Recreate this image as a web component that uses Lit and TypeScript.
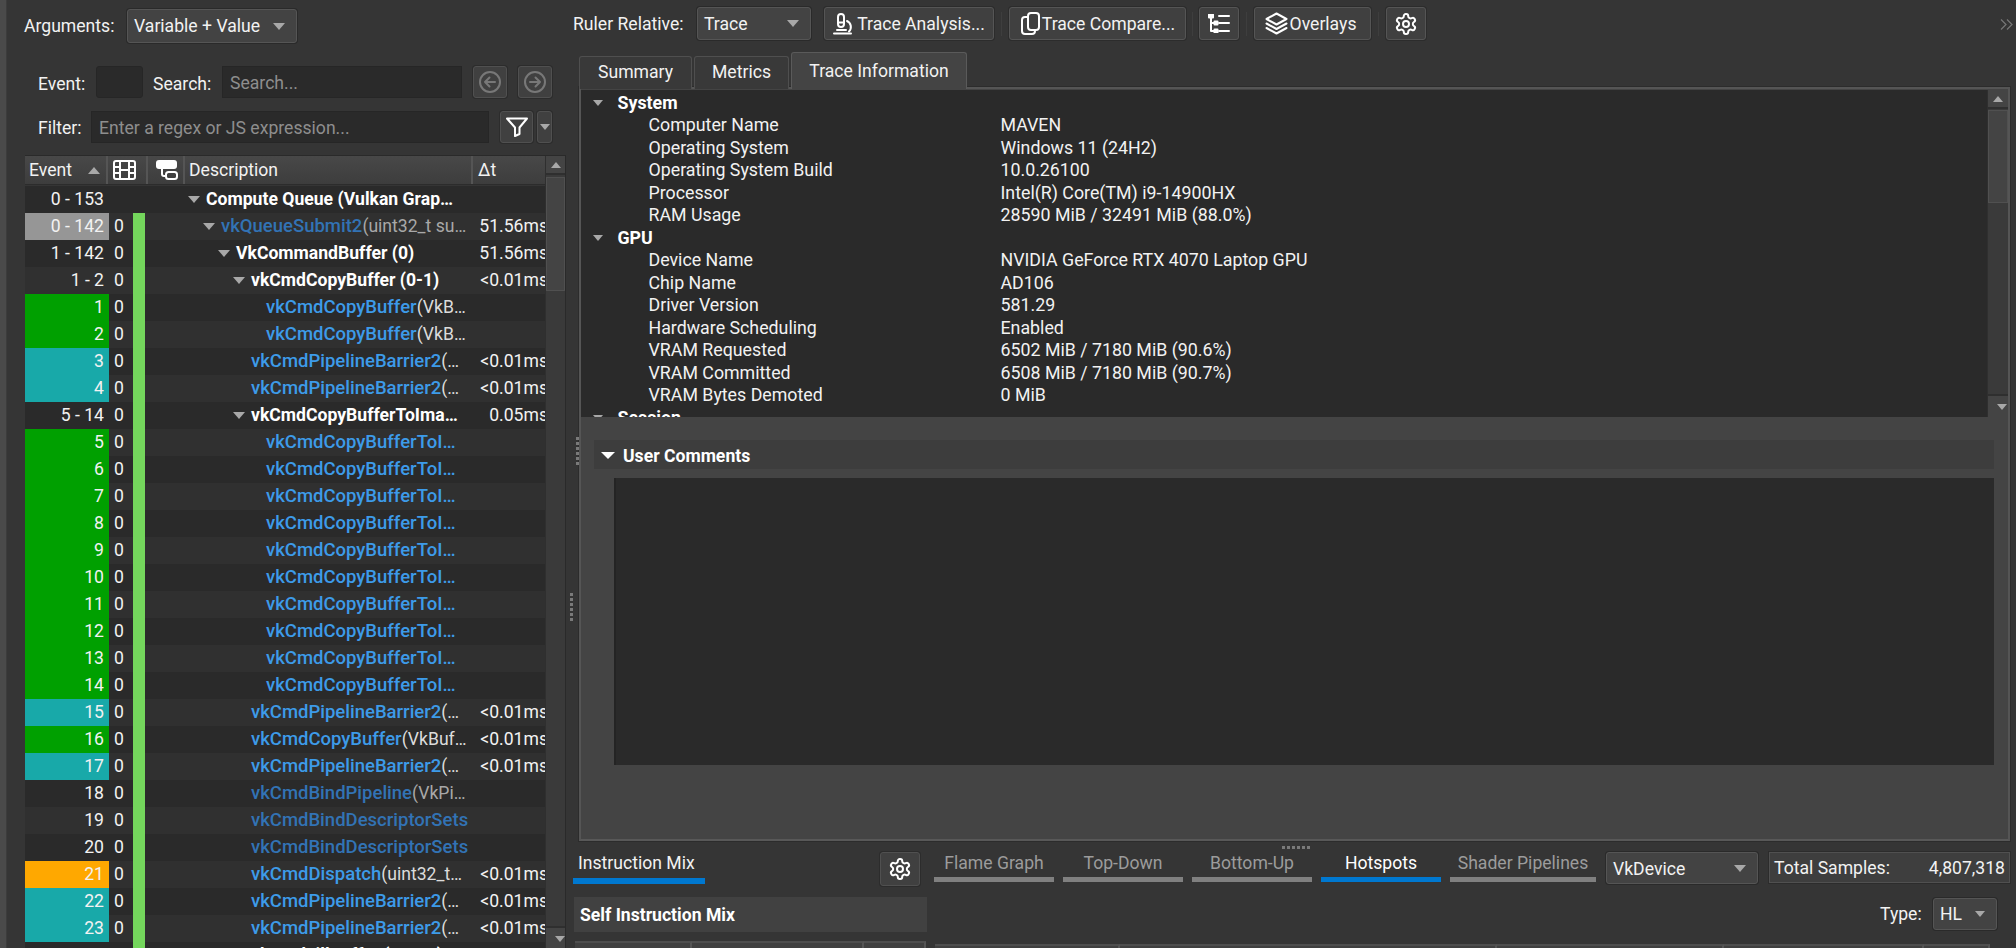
import { LitElement, html, css, svg } from 'lit';
import { customElement } from 'lit/decorators.js';

type Row = {
  ev: string; zero?: boolean; level: number; group?: boolean; fn: string; args?: string; dt?: string;
  tone?: string; dim?: boolean;
};

const copyTo = 'vkCmdCopyBufferToI…';

const rows: Row[] = [
  { ev: '0 - 153', level: 0, group: true, fn: 'Compute Queue (Vulkan Grap…' },
  { ev: '0 - 142', zero: true, level: 1, fn: 'vkQueueSubmit2', args: '(uint32_t su…', dt: '51.56ms', tone: 'gray', dim: true },
  { ev: '1 - 142', zero: true, level: 2, group: true, fn: 'VkCommandBuffer (0)', dt: '51.56ms' },
  { ev: '1 - 2', zero: true, level: 3, group: true, fn: 'vkCmdCopyBuffer (0-1)', dt: '<0.01ms' },
  { ev: '1', zero: true, level: 4, fn: 'vkCmdCopyBuffer', args: '(VkB…', tone: 'green' },
  { ev: '2', zero: true, level: 4, fn: 'vkCmdCopyBuffer', args: '(VkB…', tone: 'green' },
  { ev: '3', zero: true, level: 3, fn: 'vkCmdPipelineBarrier2', args: '(…', dt: '<0.01ms', tone: 'teal' },
  { ev: '4', zero: true, level: 3, fn: 'vkCmdPipelineBarrier2', args: '(…', dt: '<0.01ms', tone: 'teal' },
  { ev: '5 - 14', zero: true, level: 3, group: true, fn: 'vkCmdCopyBufferToIma…', dt: '0.05ms' },
  ...[5, 6, 7, 8, 9, 10, 11, 12, 13, 14].map((n) => ({ ev: String(n), zero: true, level: 4, fn: copyTo, tone: 'green' })),
  { ev: '15', zero: true, level: 3, fn: 'vkCmdPipelineBarrier2', args: '(…', dt: '<0.01ms', tone: 'teal' },
  { ev: '16', zero: true, level: 3, fn: 'vkCmdCopyBuffer', args: '(VkBuf…', dt: '<0.01ms', tone: 'green' },
  { ev: '17', zero: true, level: 3, fn: 'vkCmdPipelineBarrier2', args: '(…', dt: '<0.01ms', tone: 'teal' },
  { ev: '18', zero: true, level: 3, fn: 'vkCmdBindPipeline', args: '(VkPi…', dim: true },
  { ev: '19', zero: true, level: 3, fn: 'vkCmdBindDescriptorSets', dim: true },
  { ev: '20', zero: true, level: 3, fn: 'vkCmdBindDescriptorSets', dim: true },
  { ev: '21', zero: true, level: 3, fn: 'vkCmdDispatch', args: '(uint32_t…', dt: '<0.01ms', tone: 'orange' },
  { ev: '22', zero: true, level: 3, fn: 'vkCmdPipelineBarrier2', args: '(…', dt: '<0.01ms', tone: 'teal' },
  { ev: '23', zero: true, level: 3, fn: 'vkCmdPipelineBarrier2', args: '(…', dt: '<0.01ms', tone: 'teal' },
  { ev: '24 - 29', zero: true, level: 3, group: true, fn: 'vkCmdFillBuffer (24-29)', dt: '0.01ms' },
];

const info: [string, [string, string][]][] = [
  ['System', [
    ['Computer Name', 'MAVEN'],
    ['Operating System', 'Windows 11 (24H2)'],
    ['Operating System Build', '10.0.26100'],
    ['Processor', 'Intel(R) Core(TM) i9-14900HX'],
    ['RAM Usage', '28590 MiB / 32491 MiB (88.0%)'],
  ]],
  ['GPU', [
    ['Device Name', 'NVIDIA GeForce RTX 4070 Laptop GPU'],
    ['Chip Name', 'AD106'],
    ['Driver Version', '581.29'],
    ['Hardware Scheduling', 'Enabled'],
    ['VRAM Requested', '6502 MiB / 7180 MiB (90.6%)'],
    ['VRAM Committed', '6508 MiB / 7180 MiB (90.7%)'],
    ['VRAM Bytes Demoted', '0 MiB'],
  ]],
  ['Session', []],
];

const gearPath = svg`<path d="M12.22 2h-.44a2 2 0 0 0-2 2v.18a2 2 0 0 1-1 1.73l-.43.25a2 2 0 0 1-2 0l-.15-.08a2 2 0 0 0-2.73.73l-.22.38a2 2 0 0 0 .73 2.73l.15.1a2 2 0 0 1 1 1.72v.51a2 2 0 0 1-1 1.74l-.15.09a2 2 0 0 0-.73 2.73l.22.38a2 2 0 0 0 2.73.73l.15-.08a2 2 0 0 1 2 0l.43.25a2 2 0 0 1 1 1.73V20a2 2 0 0 0 2 2h.44a2 2 0 0 0 2-2v-.18a2 2 0 0 1 1-1.73l.43-.25a2 2 0 0 1 2 0l.15.08a2 2 0 0 0 2.73-.73l.22-.39a2 2 0 0 0-.73-2.73l-.15-.08a2 2 0 0 1-1-1.74v-.5a2 2 0 0 1 1-1.74l.15-.09a2 2 0 0 0 .73-2.73l-.22-.38a2 2 0 0 0-2.73-.73l-.15.08a2 2 0 0 1-2 0l-.43-.25a2 2 0 0 1-1-1.73V4a2 2 0 0 0-2-2z"/><circle cx="12" cy="12" r="3"/>`;

const gear = html`<svg class="ic" width="24" height="24" viewBox="0 0 24 24">${gearPath}</svg>`;

@customElement('app-root')
export class AppRoot extends LitElement {
  static styles = css`
    :host {
      display: block;
      width: 2016px;
      height: 948px;
      overflow: hidden;
      background: #353535;
      color: #f2f2f2;
      font-family: Roboto, "Liberation Sans", sans-serif;
      font-size: 17.6px;
      line-height: 22px;
    }
    * { box-sizing: border-box; }
    .app { display: flex; height: 948px; }
    .edge { width: 7px; background: #4a4a4a; border-right: 1px solid #3c3c3c; flex: none; }
    .ic { fill: none; stroke: #fff; stroke-width: 2; stroke-linecap: round; stroke-linejoin: round; flex: none; }

    .left { width: 558px; flex: none; padding-top: 9px; }
    .line { display: flex; align-items: center; }
    .line.args { height: 34px; padding-left: 17px; }
    .line.args .lbl { width: 103px; }
    .line.search { height: 32px; margin-top: 23px; padding-left: 31px; }
    .line.search .lbl { padding-top: 3px; }
    .line.filter { height: 33px; margin-top: 12px; padding-left: 31px; }
    .line.filter .lbl { padding-top: 2px; }
    .lbl { white-space: nowrap; flex: none; }
    .w-event { width: 58px; }
    .w-search { width: 69px; }
    .w-filter { width: 53px; }

    .combo {
      display: flex; align-items: center; justify-content: space-between; flex: none;
      height: 34px; padding: 0 11px 0 6px;
      background: #434343; border: 1px solid #555; border-radius: 3px;
      box-shadow: 0 0 0 1px #2a2a2a;
    }
    .combo.args { width: 170px; }
    .combo.ruler { width: 114px; height: 33px; }
    .combo.device { width: 152px; height: 32px; padding-top: 1px; }
    .combo.hl { width: 64px; height: 32px; }
    .tri { width: 0; height: 0; border-left: 6px solid transparent; border-right: 6px solid transparent; border-top: 7px solid #a8a8a8; flex: none; }
    .tri.up { border-top: 0; border-bottom: 7px solid #a8a8a8; }
    .tri.small { border-left-width: 5px; border-right-width: 5px; border-top-width: 6px; }
    .tri.up.small { border-top-width: 0; border-bottom-width: 6px; }

    .field { height: 32px; background: #2a2a2a; border: 1px solid #262626; color: #8e8e8e; padding: 0 7px; flex: none; line-height: 33px; white-space: nowrap; }
    .field.ev { width: 47px; margin-right: 10px; border-radius: 3px; }
    .field.se { width: 240px; }
    .field.fi { width: 398px; height: 32px; line-height: 32px; }
    .sq {
      display: flex; align-items: center; justify-content: center; flex: none;
      background: #404040; border: 1px solid #505050; border-radius: 3px; box-shadow: 0 0 0 1px #2c2c2c;
    }
    .nav { width: 34px; height: 32px; }
    .nav.prev { margin-left: 11px; }
    .nav.next { margin-left: 11px; }
    .nav .ic { stroke: #787878; }
    .fbtn { width: 33px; height: 32px; margin-left: 11px; }
    .fdrop { width: 15px; height: 32px; margin-left: 4px; }

    .table { display: flex; margin: 12px 0 0 18px; width: 541px; height: 794px; border-top: 1px solid #2a2a2a; border-right: 1px solid #2a2a2a; }
    .grid { width: 520px; flex: none; overflow: hidden; }
    .head { display: flex; height: 29px; background: linear-gradient(#484848, #3d3d3d); border-bottom: 1px solid #2c2c2c; margin-bottom: 1px; }
    .head > div { display: flex; align-items: center; border-right: 2px solid #555; flex: none; height: 100%; }
    .h-event { width: 83px; padding: 0 6px 0 4px; justify-content: space-between; }
    .h-film { width: 40px; padding-left: 5px; }
    .h-queue { width: 37px; padding-left: 7px; }
    .h-desc { width: 288px; padding-left: 4px; }
    .head > .h-dt { width: 72px; padding-left: 5px; border: 0; }

    .row { display: flex; height: 27px; line-height: 27px; background: #2a2a2a; white-space: nowrap; }
    .row.alt { background: #303030; }
    .ev { width: 84px; flex: none; text-align: right; padding-right: 5px; }
    .ev.gray { background: #969696; }
    .ev.green { background: #00a000; }
    .ev.teal { background: #18a9a9; }
    .ev.orange { background: #ffa800; }
    .zero { width: 24px; flex: none; padding-left: 5px; }
    .bar { width: 12px; flex: none; }
    .bar.on { background: #74d65c; }
    .desc { width: 327px; flex: none; display: flex; align-items: center; overflow: hidden; }
    .desc .tri { margin-right: 6px; }
    .b { font-weight: 700; color: #fff; }
    .fn { color: #3d9be9; font-weight: 500; font-size: 18.5px; }
    .fn.dim { color: #3273b5; }
    .fa { color: #dcdcdc; }
    .fa.dim { color: #a8a8a8; }
    .dt { width: 73px; flex: none; overflow: hidden; padding-left: 7px; }
    .dt span { display: block; width: 69px; text-align: right; }

    .sbar { width: 20px; flex: none; background: #3a3a3a; display: flex; flex-direction: column; border-left: 1px solid #2f2f2f; }
    .sbtn { height: 19px; display: flex; align-items: center; justify-content: center; background: #444; border-bottom: 2px solid #2f2f2f; flex: none; }
    .sthumb { background: #444; border: 1px solid #505050; flex: none; }
    .sthumb.a { height: 114px; margin-top: 2px; }
    .sthumb.b2 { height: 93px; margin-top: 1px; }
    .sspace { flex: 1; }
    .sbar .bottom { height: 23px; border-bottom: 0; border-top: 2px solid #2f2f2f; }

    .right { flex: 1; min-width: 0; position: relative; }
    .dots { position: absolute; display: grid; gap: 2px; }
    .dots i { display: block; width: 3px; height: 3px; background: #7a7a7a; }
    .dots.v1 { left: 5px; top: 593px; grid-auto-flow: row; }
    .dots.v2 { left: 11px; top: 437px; grid-auto-flow: row; }
    .dots.h { left: 717px; top: 846px; grid-auto-flow: column; }
    .more { position: absolute; left: 1435px; top: 19px; fill: none; stroke: #777; stroke-width: 1.2; }

    .tools { display: flex; align-items: center; height: 33px; margin-top: 7px; padding-left: 8px; }
    .tools .lbl { width: 124px; }
    .btn {
      display: flex; align-items: center; justify-content: center; gap: 2px; height: 33px; flex: none;
      background: #404040; border: 1px solid #555; border-radius: 3px; box-shadow: 0 0 0 1px #2c2c2c;
      white-space: nowrap;
    }
    .sep { width: 1px; height: 24px; background: #3e3e3e; margin: 0 7px; flex: none; }
    .sep.tight { margin: 0 6px; }
    .ml { margin-left: 13px; }
    .b-ana { width: 170px; }
    .b-cmp { width: 177px; }
    .b-tree { width: 40px; }
    .b-ovl { width: 117px; padding-right: 4px; }
    .b-gear { width: 40px; }

    .tabs { display: flex; align-items: flex-end; height: 37px; margin: 12px 0 0 14px; gap: 2px; position: relative; z-index: 1; }
    .tab { height: 33px; padding-top: 4px; text-align: center; background: #393939; border: 1px solid #4f4f4f; border-bottom: 0; border-radius: 3px 3px 0 0; flex: none; }
    .tab.t1 { width: 113px; }
    .tab.t2 { width: 95px; }
    .tab.t3 { width: 176px; height: 37px; padding-top: 7px; background: #444; border-color: #5a5a5a; }

    .frame { margin: -2px 0 0 14px; width: 1431px; height: 754px; background: #444; border: 2px solid #555; border-bottom-color: #585858; outline: 1px solid #2c2c2c; display: flex; flex-direction: column; }
    .tree { height: 327px; flex: none; background: #2a2a2a; display: flex; margin-top: 1px; overflow: hidden; font-size: 17.8px; }
    .tree-body { flex: 1; padding-top: 1.5px; overflow: hidden; height: 100%; }
    .sec { display: flex; align-items: center; height: 22.5px; padding-left: 12px; font-weight: 700; color: #fff; }
    .sec .tri { margin-right: 14.5px; }
    .kv { display: flex; height: 22.5px; align-items: center; padding-left: 67.5px; }
    .kv span:first-child { width: 352px; }
    .tree .sbar { width: 21px; }
    .ucmt { display: flex; flex-direction: column; padding: 23px 14px 0 13px; }
    .uhead { height: 29px; background: #3d3d3d; display: flex; align-items: center; padding: 2px 0 0 7px; font-weight: 700; color: #fff; }
    .uhead .tri { border-top-color: #fff; margin-right: 8px; border-left-width: 7px; border-right-width: 7px; }
    .ubox { height: 287px; margin: 9px 0 0 20px; background: #2a2a2a; border-left: 2px solid #242424; }

    .bottom { padding-left: 8px; }
    .b-row { display: flex; align-items: flex-start; }
    .b-row.one { margin-top: 11px; }
    .b-row.two { margin-top: 11px; }
    .mix { width: 132px; height: 32px; padding-left: 5px; border-bottom: 6px solid #0078d0; flex: none; }
    .gearb { width: 40px; height: 34px; margin: 0 14px 0 175px; }
    .vt { width: 120px; height: 30px; text-align: center; border-bottom: 5px solid #808080; color: #9c9c9c; margin-right: 9px; flex: none; white-space: nowrap; }
    .vt.on { color: #fff; border-bottom-color: #0078d0; }
    .vt.wide { width: 146px; margin-right: 10px; }
    .total { width: 241px; height: 31px; margin-left: 11px; display: flex; justify-content: space-between; align-items: center; padding: 0 4px 0 4px; background: #3e3e3e; border: 1px solid #505050; box-shadow: 0 0 0 1px #2c2c2c; flex: none; }
    .self { width: 353px; height: 35px; margin-left: 1px; padding-left: 6px; background: #414141; line-height: 37px; font-weight: 700; color: #fff; flex: none; }
    .type { margin-left: auto; margin-right: 19px; margin-top: 1px; display: flex; align-items: center; }
    .type .lbl { width: 53px; }
    .b-row.three { margin-top: 9px; height: 10px; }
    .th { height: 10px; background: #404040; border-top: 2px solid #4e4e4e; border-right: 2px solid #555; flex: none; }
    .th.a { width: 117px; margin-left: 2px; }
    .th.b2 { width: 172px; }
    .th.c { width: 62px; }
    .th.d { width: 185px; margin-left: 9px; margin-top: 3px; }
    .th.e { width: 377px; margin-top: 3px; }
    .th.f { width: 227px; margin-top: 3px; }
    .th.g { width: 200px; margin-top: 3px; }
    .th.h2 { width: 66px; margin-top: 3px; }
  `;

  private dots(cls: string) {
    return html`<div class="dots ${cls}"><i></i><i></i><i></i><i></i><i></i><i></i></div>`;
  }

  private renderRow(r: Row, i: number) {
    const chevron = r.group || r.level === 1;
    const indent = chevron ? 43 + 15 * r.level : 61 + 15 * r.level;
    return html`<div class="row ${i % 2 ? 'alt' : ''}">
      <div class="ev ${r.tone ?? ''}">${r.ev}</div>
      <div class="zero">${r.zero ? '0' : ''}</div>
      <div class="bar ${r.zero ? 'on' : ''}"></div>
      <div class="desc" style="padding-left:${indent}px">
        ${chevron ? html`<span class="tri"></span>` : ''}
        ${r.group
          ? html`<span class="b">${r.fn}</span>`
          : html`<span class="fn ${r.dim ? 'dim' : ''}">${r.fn}</span><span class="fa ${r.dim ? 'dim' : ''}">${r.args ?? ''}</span>`}
      </div>
      <div class="dt"><span>${r.dt ?? ''}</span></div>
    </div>`;
  }

  render() {
    return html`<div class="app">
      <div class="edge"></div>
      <div class="left">
        <div class="line args">
          <span class="lbl">Arguments:</span>
          <div class="combo args"><span>Variable + Value</span><span class="tri"></span></div>
        </div>
        <div class="line search">
          <span class="lbl w-event">Event:</span>
          <div class="field ev"></div>
          <span class="lbl w-search">Search:</span>
          <div class="field se">Search...</div>
          <div class="sq nav prev">
            <svg class="ic" width="24" height="24" viewBox="0 0 24 24"><circle cx="12" cy="12" r="10"/><path d="M17 12H7M11.5 7.5 7 12l4.500 4.500"/></svg>
          </div>
          <div class="sq nav next">
            <svg class="ic" width="24" height="24" viewBox="0 0 24 24"><circle cx="12" cy="12" r="10"/><path d="M7 12h10M12.500 7.500 17 12l-4.500 4.500"/></svg>
          </div>
        </div>
        <div class="line filter">
          <span class="lbl w-filter">Filter:</span>
          <div class="field fi">Enter a regex or JS expression...</div>
          <div class="sq fbtn">
            <svg class="ic" width="22" height="20" viewBox="0 0 22 20"><path d="M1 1.500h20l-7.500 9v6.500l-4.500 2v-8.500z"/></svg>
          </div>
          <div class="sq fdrop"><span class="tri small"></span></div>
        </div>
        <div class="table">
          <div class="grid">
            <div class="head">
              <div class="h-event"><span>Event</span><span class="tri up"></span></div>
              <div class="h-film">
                <svg class="ic" width="23" height="20" viewBox="0 0 23 20"><rect x="1" y="1" width="21" height="18" rx="2"/><path d="M7 1v18M16 1v18M1 7h6M1 13h6M16 7h6M16 13h6M7 10h9"/></svg>
              </div>
              <div class="h-queue">
                <svg width="23" height="20" viewBox="0 0 23 20"><rect x="1" y="0" width="21" height="9" rx="3" fill="#fff"/><path d="M7 8v6a2 2 0 0 0 2 2h2" fill="none" stroke="#fff" stroke-width="2"/><rect x="11" y="12" width="11" height="7" rx="2.500" fill="none" stroke="#fff" stroke-width="2"/></svg>
              </div>
              <div class="h-desc">Description</div>
              <div class="h-dt">Δt</div>
            </div>
            ${rows.map((r, i) => this.renderRow(r, i))}
          </div>
          <div class="sbar">
            <div class="sbtn"><span class="tri up small"></span></div>
            <div class="sthumb a"></div>
            <div class="sspace"></div>
            <div class="sbtn bottom"><span class="tri small"></span></div>
          </div>
        </div>
      </div>
      <div class="right">
        ${this.dots('v1')}${this.dots('v2')}${this.dots('h')}
        <svg class="more" width="13" height="11" viewBox="0 0 13 11"><path d="M1 0.500 6 5.500 1 10.500M7 0.500 12 5.500 7 10.500"/></svg>
        <div class="tools">
          <span class="lbl">Ruler Relative:</span>
          <div class="combo ruler"><span>Trace</span><span class="tri"></span></div>
          <div class="btn b-ana ml">
            <svg class="ic" width="22" height="22" viewBox="0 0 22 22"><path d="M1 20.500h17"/><rect x="5" y="1" width="6" height="13" rx="3"/><path d="M5 9.500h6M4 17h9M14 8a6.500 6.500 0 0 1 2 10.500"/></svg>
            <span>Trace Analysis...</span>
          </div>
          <span class="sep"></span>
          <div class="btn b-cmp">
            <svg class="ic" width="20" height="23" viewBox="0 0 20 23"><rect x="8" y="1" width="11" height="17" rx="3"/><path d="M8 5H5a3 3 0 0 0-3 3v11a3 3 0 0 0 3 3h7a3 3 0 0 0 3-3"/></svg>
            <span>Trace Compare...</span>
          </div>
          <span class="sep tight"></span>
          <div class="btn b-tree">
            <svg class="ic" width="22" height="19" viewBox="0 0 22 19"><path d="M3 1v16M3 9h5M3 17h5M11 2h10M11 9h10M11 17h10" /><rect x="1" y="0.500" width="4" height="3" fill="#fff"/><rect x="6.500" y="7.500" width="3" height="3" fill="#fff"/><rect x="6.500" y="15.500" width="3" height="3" fill="#fff"/></svg>
          </div>
          <span class="sep"></span>
          <div class="btn b-ovl">
            <svg class="ic" width="23" height="23" viewBox="0 0 23 23"><path d="M11.500 1.500 21.500 7l-10 5.500L1.500 7zM1.500 11.500l10 5.500 10-5.500M1.500 16l10 5.500 10-5.500"/></svg>
            <span>Overlays</span>
          </div>
          <span class="sep"></span>
          <div class="btn b-gear">${gear}</div>
        </div>
        <div class="tabs">
          <div class="tab t1">Summary</div>
          <div class="tab t2">Metrics</div>
          <div class="tab t3">Trace Information</div>
        </div>
        <div class="frame">
          <div class="tree">
            <div class="tree-body">
              ${info.map(([name, items]) => html`
                <div class="sec"><span class="tri small"></span>${name}</div>
                ${items.map(([k, v]) => html`<div class="kv"><span>${k}</span><span>${v}</span></div>`)}
              `)}
            </div>
            <div class="sbar">
              <div class="sbtn"><span class="tri up small"></span></div>
              <div class="sthumb b2"></div>
              <div class="sspace"></div>
              <div class="sbtn bottom"><span class="tri small"></span></div>
            </div>
          </div>
          <div class="ucmt">
            <div class="uhead"><span class="tri"></span>User Comments</div>
            <div class="ubox"></div>
          </div>
        </div>
        <div class="bottom">
          <div class="b-row one">
            <div class="mix">Instruction Mix</div>
            <div class="sq gearb">${gear}</div>
            <div class="vt">Flame Graph</div>
            <div class="vt">Top-Down</div>
            <div class="vt">Bottom-Up</div>
            <div class="vt on">Hotspots</div>
            <div class="vt wide">Shader Pipelines</div>
            <div class="combo device"><span>VkDevice</span><span class="tri"></span></div>
            <div class="total"><span>Total Samples:</span><span>4,807,318</span></div>
          </div>
          <div class="b-row two">
            <div class="self">Self Instruction Mix</div>
            <div class="type">
              <span class="lbl">Type:</span>
              <div class="combo hl"><span>HL</span><span class="tri small"></span></div>
            </div>
          </div>
          <div class="b-row three">
            <div class="th a"></div><div class="th b2"></div><div class="th c"></div>
            <div class="th d"></div><div class="th e"></div><div class="th f"></div><div class="th g"></div><div class="th h2"></div>
          </div>
        </div>
      </div>
    </div>`;
  }
}
